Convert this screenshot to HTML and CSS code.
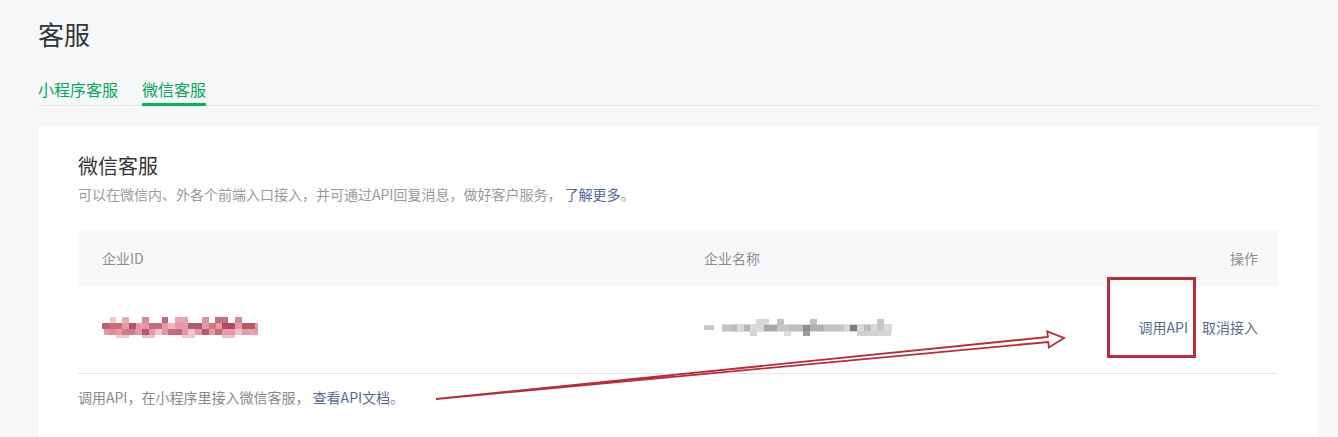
FILE: index.html
```html
<!DOCTYPE html>
<html lang="zh-CN">
<head>
<meta charset="utf-8">
<title>客服</title>
<link rel="stylesheet" href="styles.css">
</head>
<body>
<div class="page">
  <h1 class="title">客服</h1>
  <nav class="tabs">
    <a class="tab">小程序客服</a>
    <a class="tab active">微信客服</a>
  </nav>
  <section class="card">
    <h2 class="card-title">微信客服</h2>
    <p class="desc">可以在微信内、外各个前端入口接入，并可通过API回复消息，做好客户服务， <a class="link">了解更多</a>。</p>
    <div class="table">
      <div class="thead">
        <div class="cell">企业ID</div>
        <div class="cell">企业名称</div>
        <div class="cell right">操作</div>
      </div>
      <div class="trow">
        <div class="cell">
          <svg class="mosaic blur" width="158" height="22" viewBox="0 0 158 22">
            <rect x="2" y="7" width="154" height="12" fill="#e39aa4"/>
            <rect x="8" y="1" width="6" height="6" fill="#f3c9cf"/>
            <rect x="20" y="1" width="7" height="6" fill="#e9aab2"/>
            <rect x="40" y="1" width="7" height="6" fill="#d98a95"/>
            <rect x="60" y="1" width="6" height="6" fill="#c76675"/>
            <rect x="73" y="1" width="13" height="6" fill="#e7a7b0"/>
            <rect x="100" y="1" width="7" height="6" fill="#dc96a0"/>
            <rect x="113" y="1" width="13" height="6" fill="#c96f7c"/>
            <rect x="133" y="1" width="7" height="6" fill="#d88893"/>
            <rect x="0" y="7" width="7" height="6" fill="#b8606d"/>
            <rect x="7" y="7" width="13" height="6" fill="#c66f7b"/>
            <rect x="27" y="7" width="7" height="6" fill="#b25563"/>
            <rect x="47" y="7" width="13" height="6" fill="#c76b78"/>
            <rect x="66" y="7" width="7" height="6" fill="#f0b6be"/>
            <rect x="86" y="7" width="14" height="6" fill="#b65a68"/>
            <rect x="107" y="7" width="7" height="6" fill="#d17884"/>
            <rect x="120" y="7" width="13" height="6" fill="#a94e5c"/>
            <rect x="140" y="7" width="13" height="6" fill="#b65a68"/>
            <rect x="7" y="13" width="7" height="6" fill="#dd8d98"/>
            <rect x="20" y="13" width="13" height="6" fill="#d27b86"/>
            <rect x="40" y="13" width="7" height="6" fill="#b45a67"/>
            <rect x="53" y="13" width="7" height="6" fill="#f2c3c9"/>
            <rect x="66" y="13" width="14" height="6" fill="#c46a77"/>
            <rect x="86" y="13" width="7" height="6" fill="#f3c5cb"/>
            <rect x="100" y="13" width="7" height="6" fill="#b85d6a"/>
            <rect x="113" y="13" width="7" height="6" fill="#c46d79"/>
            <rect x="133" y="13" width="7" height="6" fill="#f1c0c7"/>
            <rect x="146" y="13" width="7" height="6" fill="#e6a5ae"/>
            <rect x="14" y="19" width="13" height="3" fill="#f1c6cc"/>
            <rect x="40" y="19" width="13" height="3" fill="#efc0c6"/>
            <rect x="80" y="19" width="13" height="3" fill="#f1c6cc"/>
            <rect x="120" y="19" width="13" height="3" fill="#efc0c6"/>
          </svg>
        </div>
        <div class="cell">
          <svg class="mosaic blur" width="188" height="20" viewBox="0 0 188 20">
            <rect x="0" y="8" width="10" height="5" fill="#c8c8c8"/>
            <rect x="18" y="7" width="172" height="8" fill="#dadada"/>
            <rect x="18" y="8" width="8" height="6" fill="#c6c6c6"/>
            <rect x="26" y="8" width="7" height="6" fill="#bdbdbd"/>
            <rect x="40" y="8" width="6" height="6" fill="#b5b5b5"/>
            <rect x="46" y="14" width="7" height="5" fill="#d2d2d2"/>
            <rect x="52" y="2" width="13" height="6" fill="#d6d6d6"/>
            <rect x="60" y="8" width="13" height="6" fill="#a8a8a8"/>
            <rect x="73" y="2" width="7" height="6" fill="#c3c3c3"/>
            <rect x="73" y="8" width="13" height="6" fill="#c6c6c6"/>
            <rect x="80" y="14" width="7" height="5" fill="#dedede"/>
            <rect x="86" y="8" width="13" height="6" fill="#bdbdbd"/>
            <rect x="99" y="8" width="7" height="6" fill="#8d8d8d"/>
            <rect x="99" y="14" width="7" height="5" fill="#9a9a9a"/>
            <rect x="106" y="2" width="7" height="6" fill="#c0c0c0"/>
            <rect x="106" y="8" width="14" height="6" fill="#b0b0b0"/>
            <rect x="120" y="8" width="20" height="6" fill="#c4c4c4"/>
            <rect x="146" y="8" width="7" height="6" fill="#7d7d7d"/>
            <rect x="153" y="14" width="20" height="5" fill="#d0d0d0"/>
            <rect x="160" y="8" width="7" height="6" fill="#bcbcbc"/>
            <rect x="173" y="2" width="7" height="12" fill="#c6c6c6"/>
            <rect x="173" y="14" width="14" height="5" fill="#d6d6d6"/>
          </svg>
        </div>
        <div class="cell right actions">
          <a class="action mark">调用API<span class="mark-box"></span></a>
          <a class="action">取消接入</a>
        </div>
      </div>
    </div>
    <p class="foot">调用API，在小程序里接入微信客服， <a class="link">查看API文档</a>。</p>
  </section>
  <svg class="arrow" width="650" height="90" viewBox="0 0 650 90">
    <polygon points="6,74 617.9,12 617.3,6.5 634,13 618.9,22.5 618.3,17" fill="#fff" stroke="#b3303a" stroke-width="1.8" stroke-linejoin="miter"/>
  </svg>
</div>
</body>
</html>
```

FILE: styles.css
```css
* { box-sizing: border-box; }
html, body {
  margin: 0;
  padding: 0;
  background: #f6f7f9;
}
body {
  font-family: "Noto Sans CJK SC", "Noto Sans", sans-serif;
  color: #353535;
}
.page {
  position: relative;
  padding: 16px 20px 0 38px;
  min-height: 437px;
}
.title {
  margin: 0;
  font-size: 26px;
  line-height: 36px;
  font-weight: 400;
  color: #353535;
}
.tabs {
  display: flex;
  gap: 24px;
  margin-top: 23px;
  border-bottom: 1px solid #e2e4e7;
}
.tab {
  font-size: 16px;
  line-height: 28px;
  color: #07a85a;
  border-bottom: 3px solid transparent;
  margin-bottom: -1px;
  cursor: pointer;
}
.tab.active {
  border-bottom-color: #07b15f;
}
.card {
  margin-top: 20px;
  background: #fff;
  padding: 26px 40px 40px;
  box-shadow: 0 1px 2px rgba(0, 0, 0, 0.04);
}
.card-title {
  margin: 0;
  font-size: 20px;
  line-height: 28px;
  font-weight: 400;
  color: #353535;
}
.desc {
  margin: 4px 0 0;
  font-size: 14px;
  line-height: 20px;
  color: #9a9a9a;
}
.link {
  color: #576b95;
  cursor: pointer;
}
.table {
  margin-top: 26px;
}
.thead, .trow {
  display: grid;
  grid-template-columns: 602px 1fr auto;
  align-items: center;
}
.thead {
  height: 56px;
  background: #f7f8fa;
  font-size: 14px;
  color: #8f8f8f;
}
.trow {
  height: 88px;
  border-bottom: 1px solid #e7e7eb;
  padding-bottom: 6px;
}
.cell {
  padding-left: 24px;
  line-height: 20px;
}
.cell.right {
  padding-right: 20px;
  text-align: right;
}
.mosaic {
  display: block;
}
.blur {
  filter: blur(0.6px);
}
.actions {
  display: flex;
  gap: 14px;
  font-size: 14px;
}
.action {
  color: #5e6c88;
  cursor: pointer;
}
.mark {
  position: relative;
}
.mark-box {
  position: absolute;
  left: -32px;
  top: -40px;
  width: 89px;
  height: 81px;
  border: 3px solid #b3303a;
}
.foot {
  margin: 13px 0 0;
  font-size: 14px;
  line-height: 20px;
  color: #8a8a8a;
}
.arrow {
  position: absolute;
  left: 430px;
  top: 325px;
}
```
